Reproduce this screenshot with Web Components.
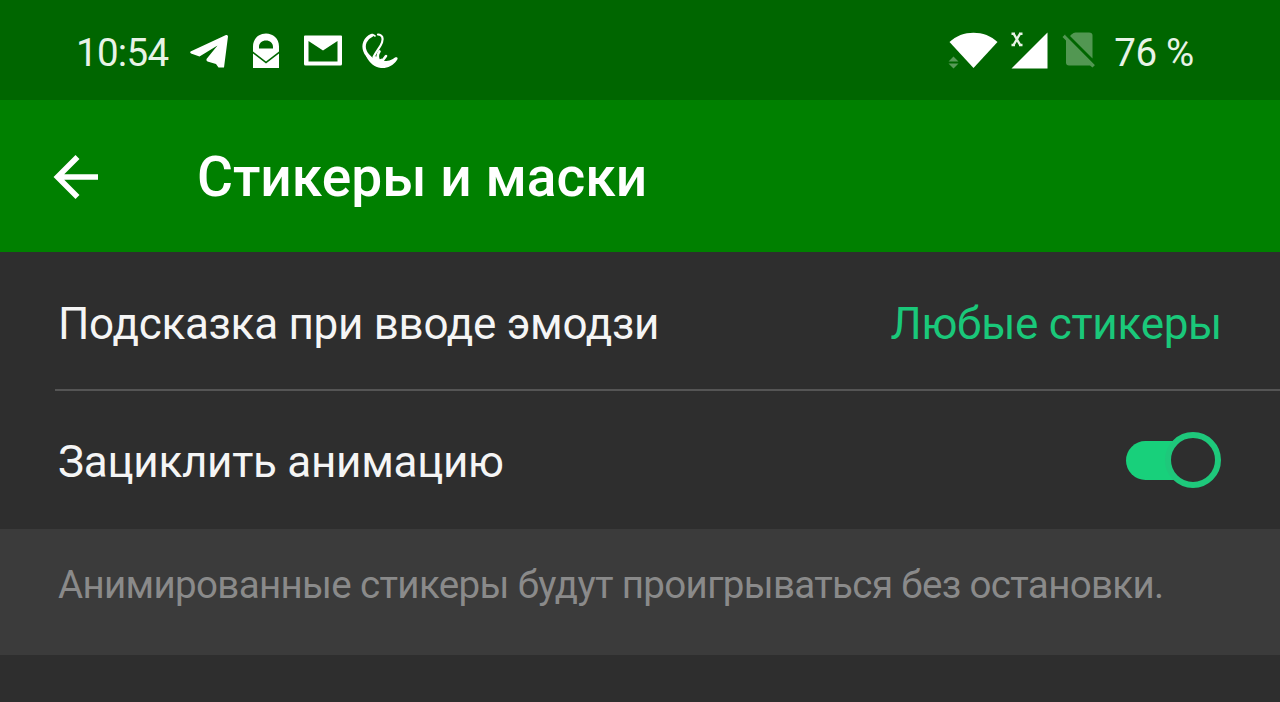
<!DOCTYPE html>
<html lang="ru">
<head>
<meta charset="utf-8">
<title>Стикеры и маски</title>
<style>
    body {
        margin: 0;
        background-color: #2e2e2e;
        font-family: Roboto, "Liberation Sans", sans-serif;
    }
</style>
</head>
<body>
<settings-screen>
    <status-bar slot="status" time="10:54" battery="76 %"></status-bar>
    <title-bar slot="header">Стикеры и маски</title-bar>
    <setting-row divider>Подсказка при вводе эмодзи<setting-value slot="end">Любые стикеры</setting-value></setting-row>
    <setting-row>Зациклить анимацию<toggle-switch slot="end"></toggle-switch></setting-row>
    <info-note>Анимированные стикеры будут проигрываться без остановки.</info-note>
</settings-screen>

<script>
const ICONS = {
    telegram: {
        size: [40, 36],
        body: `<path d="M1.500 18.500Q.5 19.500 2 20.500L10.500 23.500 28.500 12.500 17.500 26Q17 27.500 18.500 28.500L27 31 29.500 34.500H35L39 3.500Q39 1.500 37 2Z"/>`
    },
    lock: {
        size: [26, 36],
        body: `<path fill-rule="evenodd" d="M0 35V20.500L13 30.500 26 20.500V35ZM0 18.500V13.500C0 5.500 6 .6 13 .6S26 5.500 26 13.500V18.500L13 28.500ZM6 15.500H20V14C20 10 17 7.500 13 7.500S6 10 6 14Z"/>`
    },
    mail: {
        size: [38, 36],
        body: `<path fill-rule="evenodd" d="M1 2.500H37Q38 2.500 38 3.500V31Q38 32.500 36.500 32.500H1.500Q0 32.500 0 31V3.500Q0 2.500 1 2.500ZM4.500 8V28.500H33.500V8L19 17.500Z"/>`
    },
    swirl: {
        size: [36, 36],
        body: `<g fill="none" stroke="#fff" stroke-linecap="round"><path stroke-width="3.400" d="M9.500 2.500C3.500 5 .5 12 3 18 4 22 8 25 12 28"/><path stroke-width="1.600" d="M10.500 1.500 13 3"/><path stroke-width="2.200" d="M16 1.500C20.500 2 21.500 5 20 9.500 18.500 14 15 17 11.500 24"/><path stroke-width="2.600" d="M17.500 18.500C15.500 21 15 24 17 28M24 23 21 27"/></g><path d="M3 20 10 25 14 23 17 26.500 20 25.500 22.500 28C28 28 30 26.500 33 24.500 35 23.500 36.500 25 35 27 31 33 25 35.500 19 35 12 34 8 30 5 25Z"/>`
    },
    wifi: {
        size: [50, 38],
        body: `<path d="M25.500 36 1.500 10C14-2.500 37-2.500 49.500 10Z"/><path opacity=".35" d="M5.500 24.500 10.500 29.500H.5ZM5.500 36.500 10.500 31.500H.5Z"/>`
    },
    signal: {
        size: [37, 38],
        body: `<path d="M36.500.5V36.500H.5Z"/><path fill="none" stroke="#e8f3e6" stroke-width="2.400" d="M2.200 1 9.500 13.500M9.500 1 2.200 13.500M.5 1.800H4M8 1.800H11.500M.5 13H4M8 13H11.500"/>`
    },
    nosim: {
        size: [34, 38],
        body: `<g opacity=".32"><path d="M9.500 2.500Q11.500 .5 13.500 .5H27Q30.500 .5 30.500 3.500V26.500L8 4Z"/><path d="M.5 5 3 2.500 33 33 30.500 35.500 28 33.500H7Q4 33.500 4 30.500V8.500Z"/></g><path stroke="#006600" stroke-width="2" d="M4 2.500 34 32.500"/>`
    }
};

class AppIcon extends HTMLElement {

    constructor() {
        super();
        this.shadow = this.attachShadow({mode: 'open'});
    }

    connectedCallback() {
        const icon = ICONS[this.getAttribute("name")];
        const [w, h] = icon.size;

        this.shadow.innerHTML = `
        <style>
        :host {
            display: block;
            flex: none;
        }

        svg {
            display: block;
            fill: #fff;
        }
        </style>
        <svg width="${w}" height="${h}" viewBox="0 0 ${w} ${h}">${icon.body}</svg>
        `;
    }
}

class StatusBar extends HTMLElement {

    constructor() {
        super();
        this.shadow = this.attachShadow({mode: 'open'});
    }

    connectedCallback() {
        this.shadow.innerHTML = `
        <style>
        :host {
            display: flex;
            box-sizing: border-box;
            justify-content: space-between;
            height: 100px;
            padding: 2px 86px 0 76px;
            background-color: #006600;
            color: #e8f3e6;
            font-size: 38.5px;
        }

        div {
            display: flex;
            align-items: center;
        }

        .time {
            width: 93px;
            margin-right: 20px;
            letter-spacing: -0.7px;
        }

        .battery {
            margin-left: 18px;
            letter-spacing: -0.3px;
        }

        span {
            white-space: nowrap;
            line-height: 46px;
            padding-top: 3px;
        }

        .lock { margin-left: 24px; }
        .mail { margin-left: 25px; }
        .swirl { margin-left: 20px; }
        .signal { margin-left: 13px; }
        .nosim { margin-left: 14px; }
        </style>
        <div>
            <span class="time">${this.getAttribute("time")}</span>
            <app-icon name="telegram"></app-icon>
            <app-icon class="lock" name="lock"></app-icon>
            <app-icon class="mail" name="mail"></app-icon>
            <app-icon class="swirl" name="swirl"></app-icon>
        </div>
        <div>
            <app-icon name="wifi"></app-icon>
            <app-icon class="signal" name="signal"></app-icon>
            <app-icon class="nosim" name="nosim"></app-icon>
            <span class="battery">${this.getAttribute("battery")}</span>
        </div>
        `;
    }
}

class TitleBar extends HTMLElement {

    constructor() {
        super();
        this.attachShadow({mode: 'open'}).innerHTML = `
        <style>
        :host {
            display: flex;
            align-items: center;
            box-sizing: border-box;
            height: 152px;
            padding-left: 53px;
            background-color: #008000;
            color: #fff;
        }

        svg {
            flex: none;
            margin-right: 98px;
        }

        h1 {
            margin: 0;
            padding-top: 2px;
            font-size: 55.1px;
            font-weight: 500;
            line-height: 64px;
            white-space: nowrap;
        }
        </style>
        <svg width="46" height="46" viewBox="0 0 46 46" fill="none" stroke="#fff" stroke-width="5.6"><path d="M45 24H5M24.500 4 4.500 24 24.500 44"/></svg>
        <h1><slot></slot></h1>
        `;
    }
}

class SettingRow extends HTMLElement {

    constructor() {
        super();
        this.attachShadow({mode: 'open'}).innerHTML = `
        <style>
        :host {
            display: block;
            padding-left: 55px;
            color: #f5f5f5;
            font-size: 44px;
            letter-spacing: -0.28px;
        }

        .row {
            display: flex;
            align-items: center;
            justify-content: space-between;
            box-sizing: border-box;
            height: 138px;
            padding: 0 59px 0 3px;
            white-space: nowrap;
        }

        .label {
            padding-top: 3px;
        }

        :host([divider]) .row {
            height: 139px;
            padding-top: 4px;
            border-bottom: 2px solid #555;
        }
        </style>
        <div class="row">
            <span class="label"><slot></slot></span>
            <slot name="end"></slot>
        </div>
        `;
    }
}

class SettingValue extends HTMLElement {

    constructor() {
        super();
        this.attachShadow({mode: 'open'}).innerHTML = `
        <style>
        :host {
            display: block;
            margin-right: -1px;
            padding-top: 3px;
            color: #1ac87a;
        }
        </style>
        <slot></slot>
        `;
    }
}

class ToggleSwitch extends HTMLElement {

    constructor() {
        super();
        this.attachShadow({mode: 'open'}).innerHTML = `
        <style>
        :host {
            display: flex;
            align-items: center;
            justify-content: flex-end;
            width: 95px;
            height: 56px;
        }

        .track {
            flex: 1;
            height: 39px;
            margin-right: -20px;
            border-radius: 20px 0 0 20px;
            background-color: #18d07b;
        }

        .thumb {
            box-sizing: border-box;
            width: 56px;
            height: 56px;
            border: 6px solid #1ec87b;
            border-radius: 50%;
            background-color: #2e2e2e;
        }
        </style>
        <div class="track"></div>
        <div class="thumb"></div>
        `;
    }
}

class InfoNote extends HTMLElement {

    constructor() {
        super();
        this.attachShadow({mode: 'open'}).innerHTML = `
        <style>
        :host {
            display: block;
            box-sizing: border-box;
            height: 126px;
            padding: 33px 58px 0;
            background-color: #3b3b3b;
            color: #8a8a8a;
            font-size: 38.5px;
            line-height: 46px;
            letter-spacing: -0.65px;
            white-space: nowrap;
        }
        </style>
        <slot></slot>
        `;
    }
}

class SettingsScreen extends HTMLElement {

    constructor() {
        super();
        this.attachShadow({mode: 'open'}).innerHTML = `
        <style>
        :host {
            display: flex;
            flex-direction: column;
            height: 702px;
            overflow: hidden;
            background-color: #2e2e2e;
        }
        </style>
        <slot name="status"></slot>
        <slot name="header"></slot>
        <slot></slot>
        `;
    }
}

window.customElements.define('app-icon', AppIcon);
window.customElements.define('status-bar', StatusBar);
window.customElements.define('title-bar', TitleBar);
window.customElements.define('setting-row', SettingRow);
window.customElements.define('setting-value', SettingValue);
window.customElements.define('toggle-switch', ToggleSwitch);
window.customElements.define('info-note', InfoNote);
window.customElements.define('settings-screen', SettingsScreen);
</script>
</body>
</html>
